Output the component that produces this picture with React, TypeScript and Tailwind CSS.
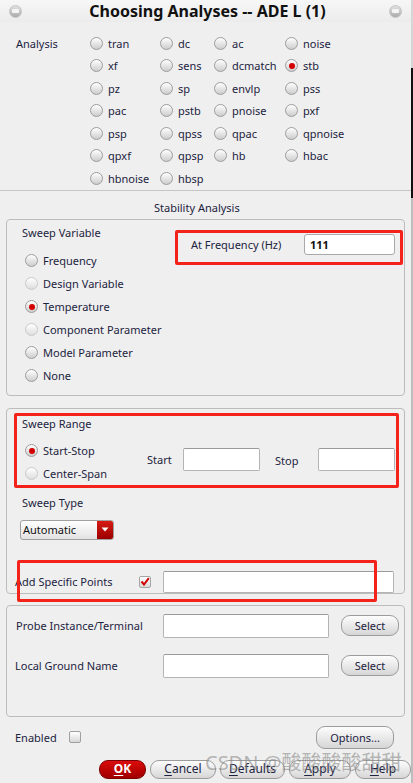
import { ReactNode } from 'react'

function Radio({ checked, dim }: { checked?: boolean; dim?: boolean }) {
  return (
    <span
      className={`flex h-[13px] w-[13px] shrink-0 items-center justify-center rounded-full border bg-linear-to-b ${
        dim
          ? 'border-[#c9c9c9] from-[#ffffff] to-[#dedede]'
          : 'border-[#9d9d9d] from-[#ffffff] to-[#cdcdcd]'
      }`}
    >
      {checked && <span className="h-[6px] w-[6px] rounded-full bg-[#d40000]" />}
    </span>
  )
}

function Option({ label, checked, dim }: { label: string; checked?: boolean; dim?: boolean }) {
  return (
    <div className="flex h-[22.5px] items-center gap-[5px]">
      <Radio checked={checked} dim={dim} />
      <span>{label}</span>
    </div>
  )
}

function Field({ className }: { className: string }) {
  return (
    <div
      className={`rounded-[2px] border border-[#b4b4b4] border-t-[#9a9a9a] bg-white ${className}`}
    />
  )
}

function GrayButton({ className, children }: { className: string; children: ReactNode }) {
  return (
    <div
      className={`flex items-center justify-center rounded-[9px] border border-[#9c9c9c] bg-linear-to-b from-[#fdfdfd] to-[#d6d6d6] text-[#1c2340] ${className}`}
    >
      {children}
    </div>
  )
}

function Frame({ className, children }: { className: string; children: ReactNode }) {
  return (
    <div className={`ml-[6px] mr-[6px] rounded-[4px] border border-[#bcbcbc] ${className}`}>
      {children}
    </div>
  )
}

function TitleDot() {
  return (
    <span className="flex h-[13px] w-[13px] items-center justify-center rounded-full border border-[#c4c4c4] bg-linear-to-b from-[#e2e2e2] to-[#aaaaaa]">
      <span className="h-[4px] w-[7px] rounded-[1px] bg-[#f4f4f4]" />
    </span>
  )
}

const analyses: { label: string; checked?: boolean }[][] = [
  [{ label: 'tran' }, { label: 'dc' }, { label: 'ac' }, { label: 'noise' }],
  [{ label: 'xf' }, { label: 'sens' }, { label: 'dcmatch' }, { label: 'stb', checked: true }],
  [{ label: 'pz' }, { label: 'sp' }, { label: 'envlp' }, { label: 'pss' }],
  [{ label: 'pac' }, { label: 'pstb' }, { label: 'pnoise' }, { label: 'pxf' }],
  [{ label: 'psp' }, { label: 'qpss' }, { label: 'qpac' }, { label: 'qpnoise' }],
  [{ label: 'qpxf' }, { label: 'qpsp' }, { label: 'hb' }, { label: 'hbac' }],
  [{ label: 'hbnoise' }, { label: 'hbsp' }],
]

const sweepVars = [
  { label: 'Frequency' },
  { label: 'Design Variable', dim: true },
  { label: 'Temperature', checked: true },
  { label: 'Component Parameter', dim: true },
  { label: 'Model Parameter' },
  { label: 'None' },
]

export default function App() {
  return (
    <div className="relative flex h-[783px] w-[413px] overflow-hidden bg-[#efefef] font-['Noto_Sans',sans-serif] text-[11px] leading-none text-[#1c2340]">
      <div className="flex w-[411px] flex-col">
        {/* title bar */}
        <div className="flex h-[22px] items-center justify-between bg-linear-to-b from-[#f7f7f7] to-[#ececec] px-[9px]">
          <TitleDot />
          <span className="pl-[4px] text-[16px] font-bold text-[#111111]">Choosing Analyses -- ADE L (1)</span>
          <TitleDot />
        </div>

        {/* analysis list */}
        <div className="flex pt-[10px]">
          <div className="flex h-[22.5px] w-[90px] items-center pl-[16px]">Analysis</div>
          <div className="grid grid-cols-[70px_54px_71px_1fr]">
            {analyses.flat().map((a) => (
              <Option key={a.label} label={a.label} checked={a.checked} />
            ))}
          </div>
        </div>
        <div className="h-[1px] bg-[#c6c6c6]" />

        <div className="mt-[9px] flex h-[16px] items-center pl-[154px]">Stability Analysis</div>

        {/* sweep variable */}
        <Frame className="mt-[3px] flex h-[177px]">
          <div className="flex flex-col">
            <div className="mt-[5px] flex h-[16px] items-center pl-[15px]">Sweep Variable</div>
            <div className="mt-[8.5px] flex flex-col pl-[18px]">
              {sweepVars.map((s) => (
                <div key={s.label} className="flex h-[23px] items-center gap-[5px]">
                  <Radio checked={s.checked} dim={s.dim} />
                  <span>{s.label}</span>
                </div>
              ))}
            </div>
          </div>
          <div className="mr-[1px] ml-auto mt-[10px] h-[35px] w-[228px] rounded-[2px] border-[3px] border-[#f3231c]">
            <div className="mt-[1px] flex h-[21px] items-center pl-[13px]">
              <span className="w-[113px]">At Frequency (Hz)</span>
              <div className="flex h-[21px] w-[91px] items-center rounded-[3px] border border-[#a9a9a9] bg-white pl-[5px] text-[11px] font-bold text-[#111111]">
                111
              </div>
            </div>
          </div>
        </Frame>

        {/* sweep range */}
        <Frame className="mt-[12px] flex h-[186px] flex-col">
          <div className="ml-[7px] mt-[4px] h-[75px] w-[385px] rounded-[2px] border-[3px] border-[#f3231c]">
            <div className="flex h-[16px] items-center pl-[5px]">Sweep Range</div>
            <div className="mt-[7.5px] flex">
              <div className="flex w-[130px] flex-col pl-[8px]">
                <div className="flex h-[23px] items-center gap-[5px]">
                  <Radio checked />
                  <span>Start-Stop</span>
                </div>
                <div className="flex h-[23px] items-center gap-[5px]">
                  <Radio dim />
                  <span>Center-Span</span>
                </div>
              </div>
              <div className="mt-[8.5px] flex h-[23px] items-center">
                <span className="w-[36px]">Start</span>
                <Field className="h-[23px] w-[77px]" />
                <span className="ml-[15px] w-[43px] pt-[2px]">Stop</span>
                <Field className="h-[23px] w-[77px]" />
              </div>
            </div>
          </div>
          <div className="mt-[7px] flex h-[16px] items-center pl-[15px]">Sweep Type</div>
          <div className="ml-[13px] mt-[9px] flex h-[20px] w-[94px] overflow-hidden rounded-[3px] border border-[#a0a0a0] bg-linear-to-b from-[#ffffff] to-[#e2e2e2]">
            <span className="flex flex-1 items-center pl-[2px] text-[#111111]">Automatic</span>
            <span className="flex w-[16px] items-center justify-center bg-linear-to-b from-[#d81a14] to-[#9a0000]">
              <svg width="8" height="5" viewBox="0 0 8 5">
                <path d="M0.5 0.5 L7.5 0.5 L4 4.5 Z" fill="#ffffff" />
              </svg>
            </span>
          </div>
          <div className="relative mt-[31px] flex h-[22px] items-center">
            <span className="w-[132px] pl-[8px]">Add Specific Points</span>
            <span className="flex h-[12px] w-[12px] items-center justify-center rounded-[2px] border border-[#a5a5a5] bg-linear-to-b from-[#ffffff] to-[#d8d8d8]">
              <svg width="10" height="9" viewBox="0 0 10 9">
                <path d="M1.5 4.5 L4 7.5 L8.8 1.2" stroke="#d00000" strokeWidth="2" fill="none" />
              </svg>
            </span>
            <Field className="ml-[12px] h-[22px] w-[231px]" />
            <div className="absolute left-[10px] top-[-11px] h-[42px] w-[360px] rounded-[2px] border-[3px] border-[#f3231c]" />
          </div>
        </Frame>

        {/* probe */}
        <Frame className="mt-[11px] flex h-[112px] flex-col">
          <div className="mt-[8px] flex h-[24px] items-center">
            <span className="w-[156px] pl-[9px]">Probe Instance/Terminal</span>
            <Field className="h-[24px] w-[166px]" />
            <GrayButton className="ml-[12px] h-[21px] w-[58px]">Select</GrayButton>
          </div>
          <div className="mt-[16px] flex h-[24px] items-center">
            <span className="w-[156px] pl-[8px]">Local Ground Name</span>
            <Field className="h-[24px] w-[166px]" />
            <GrayButton className="ml-[12px] h-[21px] w-[58px]">Select</GrayButton>
          </div>
        </Frame>

        {/* enabled / options */}
        <div className="mt-[9px] flex h-[23px] items-center pl-[15px] pr-[17px]">
          <span className="w-[54px]">Enabled</span>
          <span className="h-[12px] w-[12px] rounded-[2px] border border-[#a0a0a0] bg-linear-to-b from-[#ffffff] to-[#d8d8d8]" />
          <GrayButton className="ml-auto h-[23px] w-[78px]">Options...</GrayButton>
        </div>

        {/* dialog buttons */}
        <div className="mt-[11px] flex h-[19px] gap-[4px] pl-[99px]">
          <div className="flex h-[19px] w-[47px] items-center justify-center rounded-[9px] border border-[#7a0000] bg-linear-to-b from-[#dc0c0c] to-[#a00000] text-[12px] font-bold text-white">
            <span className="underline underline-offset-2">O</span>K
          </div>
          <GrayButton className="h-[19px] w-[66px] text-[12px]">
            <span className="underline underline-offset-2">C</span>ancel
          </GrayButton>
          <GrayButton className="h-[19px] w-[65px] text-[12px]">
            <span className="underline underline-offset-2">D</span>efaults
          </GrayButton>
          <GrayButton className="h-[19px] w-[62px] text-[12px]">
            <span className="underline underline-offset-2">A</span>pply
          </GrayButton>
          <GrayButton className="h-[19px] w-[56px] text-[12px]">
            <span className="underline underline-offset-2">H</span>elp
          </GrayButton>
        </div>
      </div>

      {/* window edge behind */}
      <div className="flex w-[2px] flex-col">
        <div className="h-[68px] bg-[#d6d6d6]" />
        <div className="h-[130px] bg-[#111111]" />
        <div className="flex-1 bg-[#bdbdbd]" />
      </div>

      {/* watermark */}
      <div className="absolute left-[205px] top-[753px] whitespace-nowrap font-['Noto_Sans','Noto_Sans_CJK_SC',sans-serif] text-[20px] leading-none text-[#8a8a8a]/60">
        CSDN @酸酸酸酸甜甜
      </div>
    </div>
  )
}
